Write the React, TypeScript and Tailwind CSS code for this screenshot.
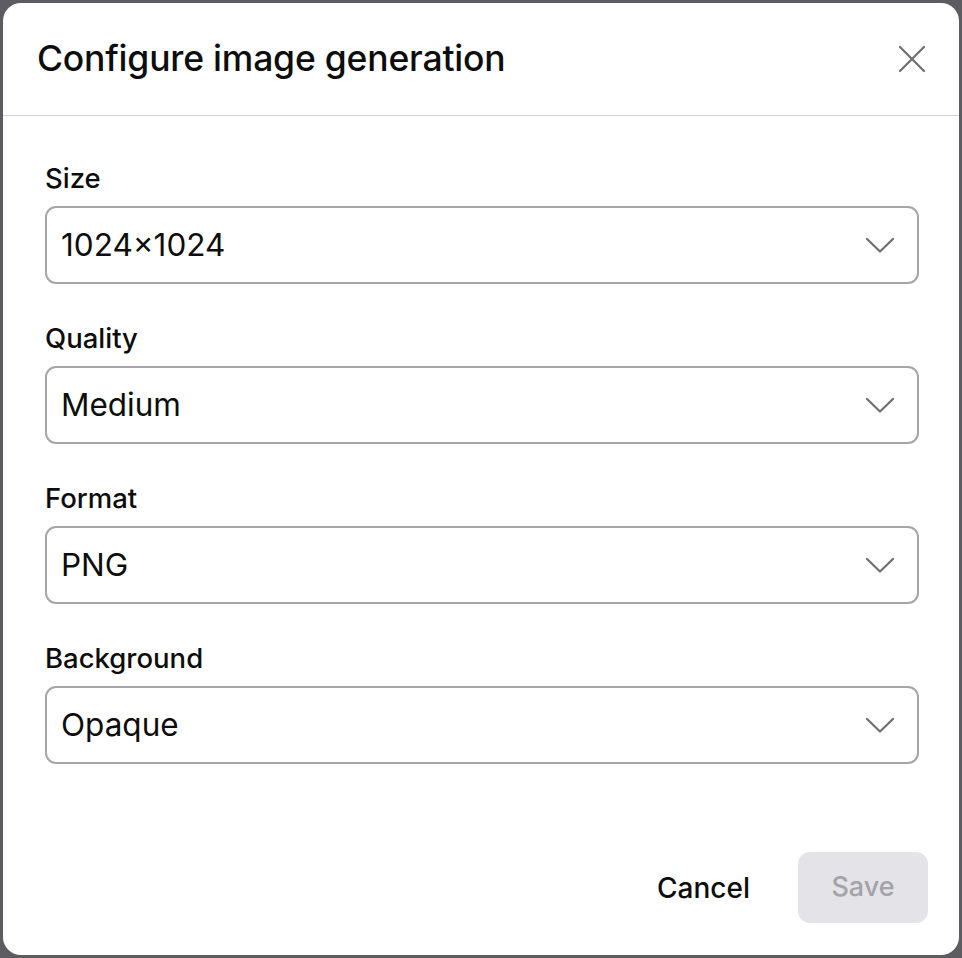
const fields = [
  { label: "Size", value: "1024×1024" },
  { label: "Quality", value: "Medium" },
  { label: "Format", value: "PNG" },
  { label: "Background", value: "Opaque" },
];

const Chevron = () => (
  <svg width="30" height="18" viewBox="0 0 30 18" fill="none" className="text-[#6e6e73]">
    <path d="M2 3 L15 15.5 L28 3" stroke="currentColor" strokeWidth="2.2" strokeLinecap="round" strokeLinejoin="round" />
  </svg>
);

const CloseIcon = () => (
  <svg width="28" height="28" viewBox="0 0 28 28" fill="none" className="text-[#6e6e73]">
    <path d="M2 2 L26 26 M26 2 L2 26" stroke="currentColor" strokeWidth="2.2" strokeLinecap="round" />
  </svg>
);

const SelectField = ({ label, value }: { label: string; value: string }) => {
  return (
    <div className="flex flex-col">
      <label className="text-[27.5px] leading-[32px] font-medium text-[#0d0d0d] mb-[12px]">{label}</label>
      <button className="h-[78px] w-full flex items-center justify-between rounded-[11px] border-2 border-[#a5a5aa] bg-white pl-[14px] pr-[22px] text-left">
        <span className="text-[31.5px] text-[#0d0d0d]">{value}</span>
        <Chevron />
      </button>
    </div>
  );
};

const App = () => {
  return (
    <div className="h-[958px] w-full bg-[#5c5c61] p-[3px] flex font-['Inter',sans-serif]">
      <div className="flex flex-col w-full h-full bg-white rounded-[18px] overflow-hidden">
        <div className="h-[113px] flex items-center justify-between pl-[34px] pr-[32px] border-b-[1.5px] border-[#d4d4d6] shrink-0">
          <h2 className="text-[35.5px] font-medium text-[#0d0d0d] tracking-[-0.2px]">Configure image generation</h2>
          <button className="p-[1px]">
            <CloseIcon />
          </button>
        </div>
        <div className="flex flex-col gap-[38px] pt-[46px] pl-[42px] pr-[40px]">
          {fields.map((f) => (
            <SelectField key={f.label} label={f.label} value={f.value} />
          ))}
        </div>
        <div className="mt-auto flex items-center justify-end gap-[24px] pr-[31px] pb-[32px]">
          <button className="h-[71px] px-[24px] text-[28px] font-medium text-[#0d0d0d]">Cancel</button>
          <button className="h-[71px] w-[130px] rounded-[12px] bg-[#e3e3e8] text-[27px] font-medium text-[#a3a3a8]">
            Save
          </button>
        </div>
      </div>
    </div>
  );
};

export default App;
